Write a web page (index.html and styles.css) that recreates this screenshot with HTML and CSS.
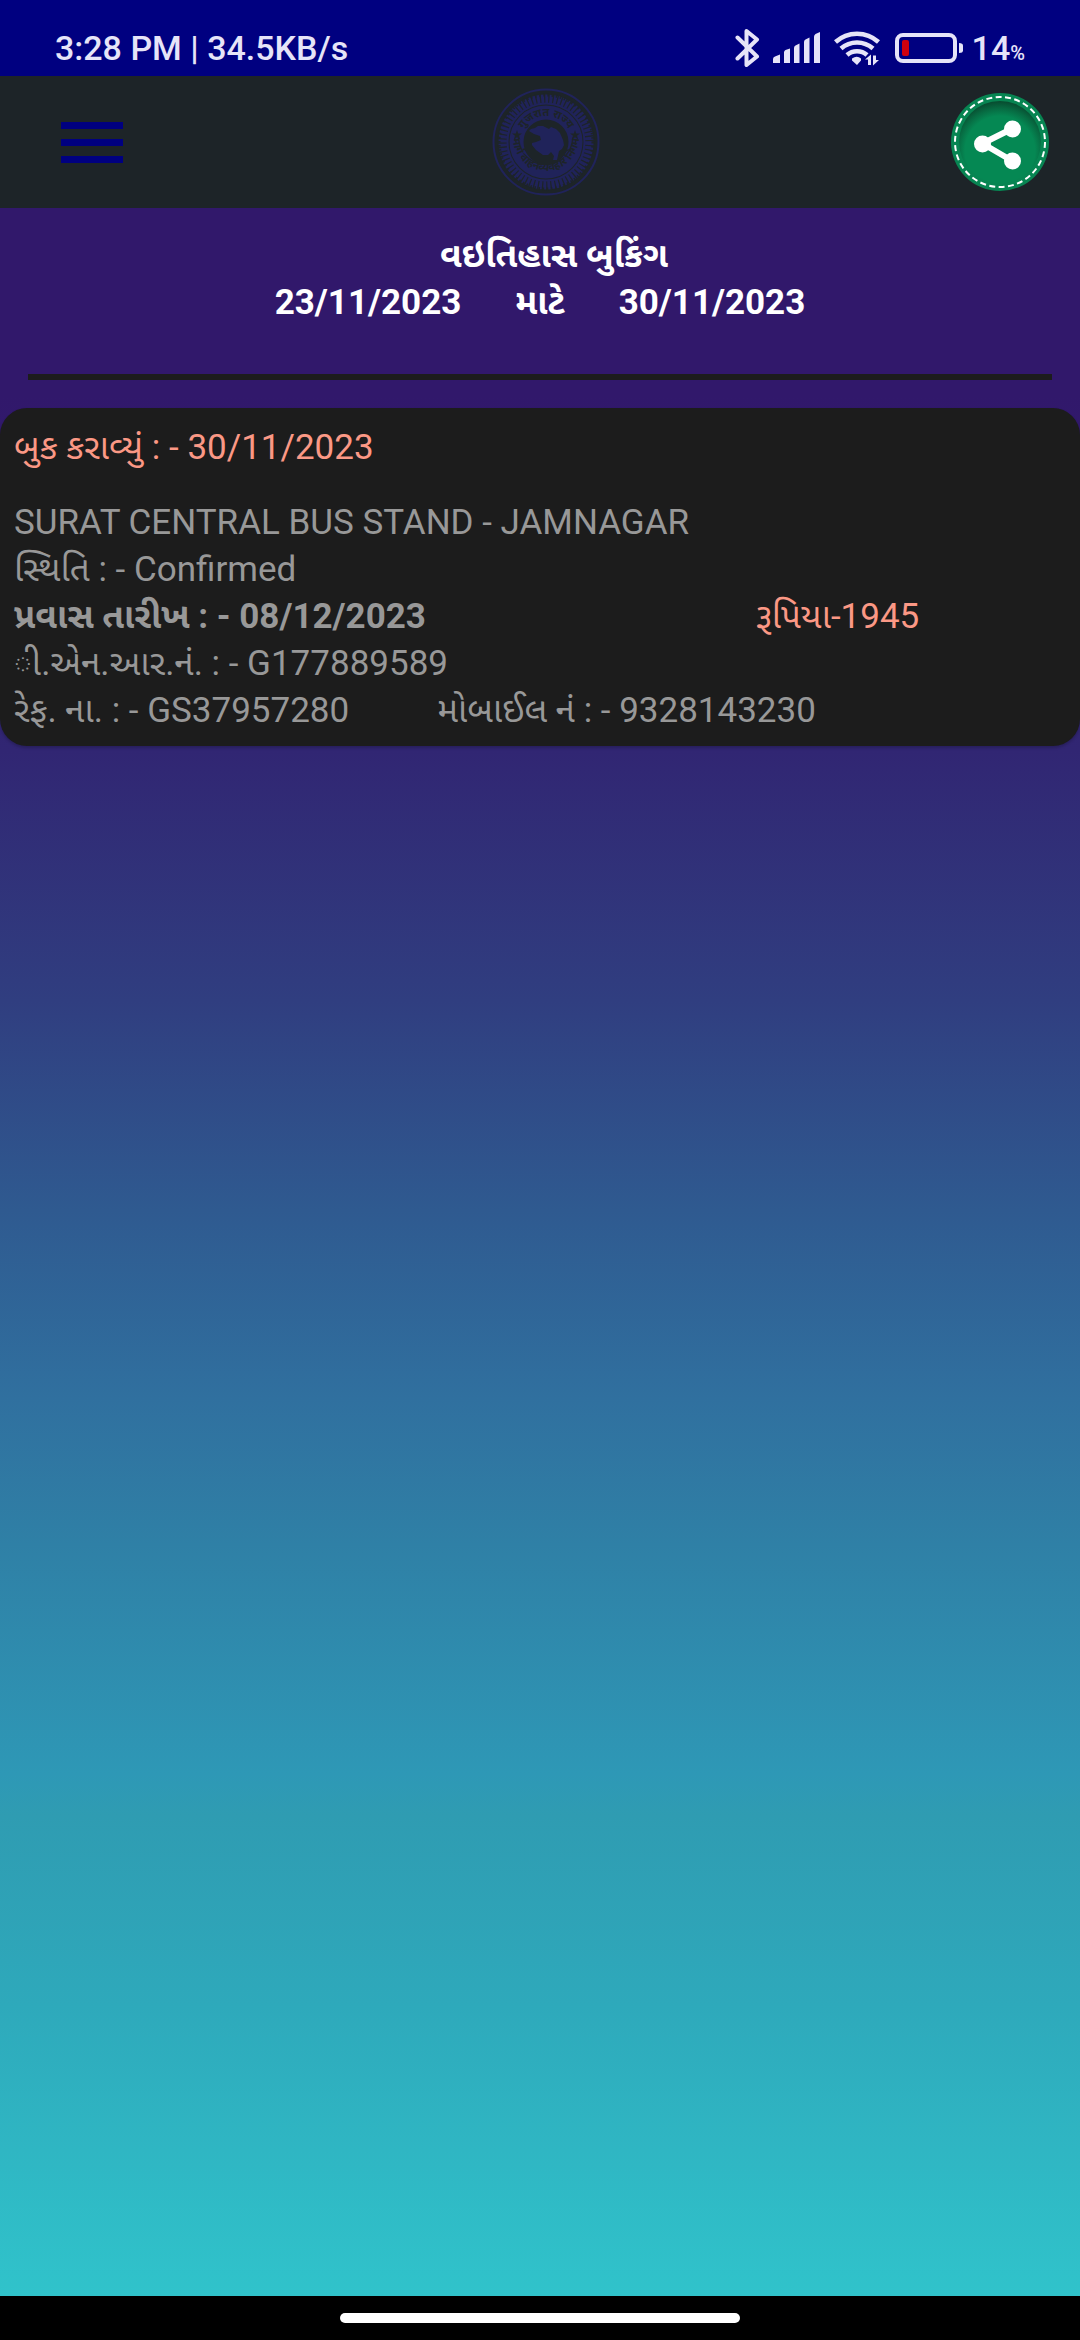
FILE: index.html
```html
<!DOCTYPE html>
<html lang="gu">
<head>
<meta charset="utf-8">
<meta name="viewport" content="width=device-width, initial-scale=1">
<title>વઇતિહાસ બુકિંગ</title>
<link rel="stylesheet" href="styles.css">
</head>
<body>
<div class="status">
  <span class="status-text">3:28 PM | 34.5KB/s</span>
  <div class="status-icons">
    <svg class="icon-bt" width="26" height="40" viewBox="0 0 26 40" aria-hidden="true"><path d="M2.500 9.500 22 28.500 11.500 37V3L22 11.500 2.500 30.500" fill="none" stroke="#e6e4f8" stroke-width="4" stroke-linejoin="round" stroke-linecap="round"/></svg>
    <svg class="icon-signal" width="48" height="32" viewBox="0 0 48 32" aria-hidden="true"><path d="M0 31v-4q0-2 2-2.500l5-2v8.500zM11 31V20.500q0-2 1.500-2.500l4.500-1.500V31zM21 31V16q0-2 1.500-2.500l4-2V31zM31 31V10q0-2 1.500-2.500l4-2V31zM41 31V5q0-2 1.500-3L47 0v31z" fill="#e6e4f8"/></svg>
    <svg class="icon-wifi" width="46" height="36" viewBox="0 0 46 36" aria-hidden="true"><g fill="none" stroke="#e6e4f8" stroke-width="4.500"><path d="M1.500 12a32 32 0 0 1 43 0"/><path d="M7 18.500a24 24 0 0 1 32 0"/><path d="M13 25a15 15 0 0 1 20 0"/></g><path d="M18 28.500q5-3.500 9 0v2L23 35l-5-4.500zM31 29.500l6-5V35h-3v-5.500zM39 25.500h3V30h3l-6 5.500z" fill="#e6e4f8"/></svg>
    <svg class="icon-battery" width="69" height="30" viewBox="0 0 69 30" aria-hidden="true"><rect x="2" y="2" width="58" height="26" rx="6" fill="none" stroke="#e6e4f8" stroke-width="4"/><rect x="7" y="7" width="7" height="16" rx="2" fill="#d0000f"/><path d="M64 10q4 0 4 2.500v5q0 2.500-4 2.500z" fill="#e6e4f8"/></svg>
    <span class="status-text">14<span class="percent">%</span></span>
  </div>
</div>

<header class="topbar">
  <button class="menu" type="button" aria-label="Menu"><span class="bar"></span><span class="bar"></span><span class="bar"></span></button>
  <svg class="emblem" width="108" height="108" viewBox="0 0 108 108" aria-hidden="true">
    <defs>
      <path id="arc-top" d="M28 54a26 26 0 0 1 52 0"/>
      <path id="arc-bottom" d="M21.500 44a33 33 0 1 0 65 0"/>
    </defs>
    <g fill="none" stroke="#20235a">
      <circle cx="54" cy="54" r="52.500" stroke-width="2"/>
      <circle cx="54" cy="54" r="43" stroke-width="9" stroke-dasharray="3 1.200"/>
      <circle cx="54" cy="54" r="47" stroke-width="3" stroke-dasharray="1.500 2.700" stroke="#1d2428"/>
      <circle cx="54" cy="54" r="29.500" stroke-width="14"/>
      <circle cx="54" cy="54" r="38.500" stroke-width="2"/>
    </g>
    <g class="emblem-text">
      <text><textPath href="#arc-top" startOffset="50%">गुजरात राज्य</textPath></text>
      <text><textPath href="#arc-bottom" startOffset="50%">मार्ग वाहनव्यवहार निगम</textPath></text>
    </g>
    <path d="M25 42l1.200 3.500h3.800l-3 2.300 1.200 3.700-3.200-2.200-3.200 2.200 1.200-3.700-3-2.300h3.800zM83 42l1.200 3.500h3.800l-3 2.300 1.200 3.700-3.200-2.200-3.200 2.200 1.200-3.700-3-2.300h3.800z" fill="#1d2428"/>
    <path d="M37 43l2-2 4-1 3-2 5 0 6 3 2-2 5 2 4 4 3 7 1 5-2 4-3 2-2 9-4 0 1-4-3-4-3 3-5 0-7-5-4-5 0-2 4-1 5-2-1-4-6-2z" fill="#20235a"/>
  </svg>
  <button class="share" type="button" aria-label="Share">
    <svg width="98" height="98" viewBox="0 0 98 98" aria-hidden="true">
      <defs><radialGradient id="disc" gradientUnits="userSpaceOnUse" cx="49" cy="58" r="50"><stop offset="0" stop-color="#058853"/><stop offset=".7" stop-color="#058853"/><stop offset=".86" stop-color="#076941"/><stop offset="1" stop-color="#084a2f"/></radialGradient></defs>
      <circle cx="49" cy="49" r="49" fill="#078552"/>
      <circle cx="49" cy="49" r="41" fill="url(#disc)"/>
      <circle cx="49" cy="49" r="45" fill="none" stroke="#fff" stroke-width="2" stroke-dasharray="6 3.425"/>
      <path d="M61.500 35.500 31.500 50.500 61.500 68" fill="none" stroke="#fff" stroke-width="6"/>
      <g fill="#fff"><circle cx="61.500" cy="36" r="8.500"/><circle cx="31.500" cy="51" r="8.500"/><circle cx="61.500" cy="68" r="8.500"/></g>
    </svg>
  </button>
</header>

<main class="content">
  <section class="range">
    <h1 class="title">વઇતિહાસ બુકિંગ</h1>
    <p class="dates"><span>23/11/2023</span><span>માટે</span><span>30/11/2023</span></p>
    <hr class="rule">
  </section>
  <article class="card">
    <p class="line accent booked">બુક કરાવ્યું : - 30/11/2023</p>
    <p class="line">SURAT CENTRAL BUS STAND - JAMNAGAR</p>
    <p class="line">સ્થિતિ : - Confirmed</p>
    <div class="split">
      <p class="line strong">પ્રવાસ તારીખ : - 08/12/2023</p>
      <p class="amount accent">રૂપિયા-1945</p>
    </div>
    <p class="line">ી.એન.આર.નં. : - G177889589</p>
    <p class="line refs"><span>રેફ. ના. : - GS37957280</span><span>મોબાઈલ નં : - 9328143230</span></p>
  </article>
</main>

<footer class="navbar"><div class="home"></div></footer>
</body>
</html>
```
FILE: styles.css
```css
* {
  box-sizing: border-box;
}

body {
  margin: 0;
  min-height: 100vh;
  display: flex;
  flex-direction: column;
  font-family: Roboto, "Noto Sans Gujarati", "Noto Sans", sans-serif;
  font-size: 35px;
  line-height: 47px;
  background: #000;
}

h1,
p {
  margin: 0;
  font-size: inherit;
}

button {
  padding: 0;
  border: 0;
  background: none;
}

svg {
  display: block;
}

.status {
  display: flex;
  justify-content: space-between;
  align-items: center;
  height: 76px;
  padding: 20px 55px 0 55px;
  background: #000080;
  color: #e6e4f8;
}

.status-icons {
  display: flex;
  align-items: center;
}

.status-text {
  font-size: 34px;
  font-weight: 500;
  line-height: 40px;
}

.percent {
  font-size: 20px;
  line-height: 20px;
}

.icon-signal {
  margin-left: 12px;
}

.icon-wifi {
  margin-left: 13px;
}

.icon-battery {
  margin: 0 8px 0 15px;
}

.topbar {
  display: flex;
  justify-content: space-between;
  align-items: center;
  height: 132px;
  padding: 0 31px 0 61px;
  background: #1d2428;
}

.menu {
  display: flex;
  flex-direction: column;
  gap: 10px;
  width: 80px;
  padding-right: 18px;
}

.bar {
  height: 7px;
  background: #000080;
}

.emblem-text {
  font-family: "Noto Sans Devanagari", "Noto Sans", sans-serif;
  font-size: 11px;
  font-weight: 700;
  text-anchor: middle;
  fill: #1d2428;
}

.content {
  flex: 1;
  background: linear-gradient(#31186b 0%, #31186b 9%, #312673 26%, #303e80 38%, #2f5a90 48%, #30709f 57%, #2f80a6 64%, #2e98b6 75%, #2f9cb2 77%, #2ea9bb 86%, #30c3cb 100%);
}

.range {
  padding: 24px 28px 28px;
  color: #fff;
  font-weight: 700;
  text-align: center;
}

.title {
  padding-left: 28px;
}

.dates {
  display: flex;
  justify-content: center;
  gap: 54px;
}

.rule {
  height: 6px;
  margin: 48px 0 0;
  border: 0;
  background: #1c1c1c;
}

.card {
  padding: 16px 0 12px;
  border-radius: 27px;
  background: #1c1c1c;
  box-shadow: 0 2px 3px rgba(0, 0, 0, 0.2);
  color: #989898;
}

.line {
  padding-left: 14px;
}

.booked {
  margin-bottom: 28px;
}

.accent {
  color: #fb9885;
}

.strong {
  font-weight: 700;
}

.split {
  display: grid;
  grid-template-columns: 7fr 3fr;
}

.refs {
  display: flex;
  gap: 88px;
}

.navbar {
  display: flex;
  justify-content: center;
  align-items: center;
  height: 44px;
  background: #000;
}

.home {
  width: 37%;
  height: 10px;
  border-radius: 5px;
  background: #fff;
}
```
